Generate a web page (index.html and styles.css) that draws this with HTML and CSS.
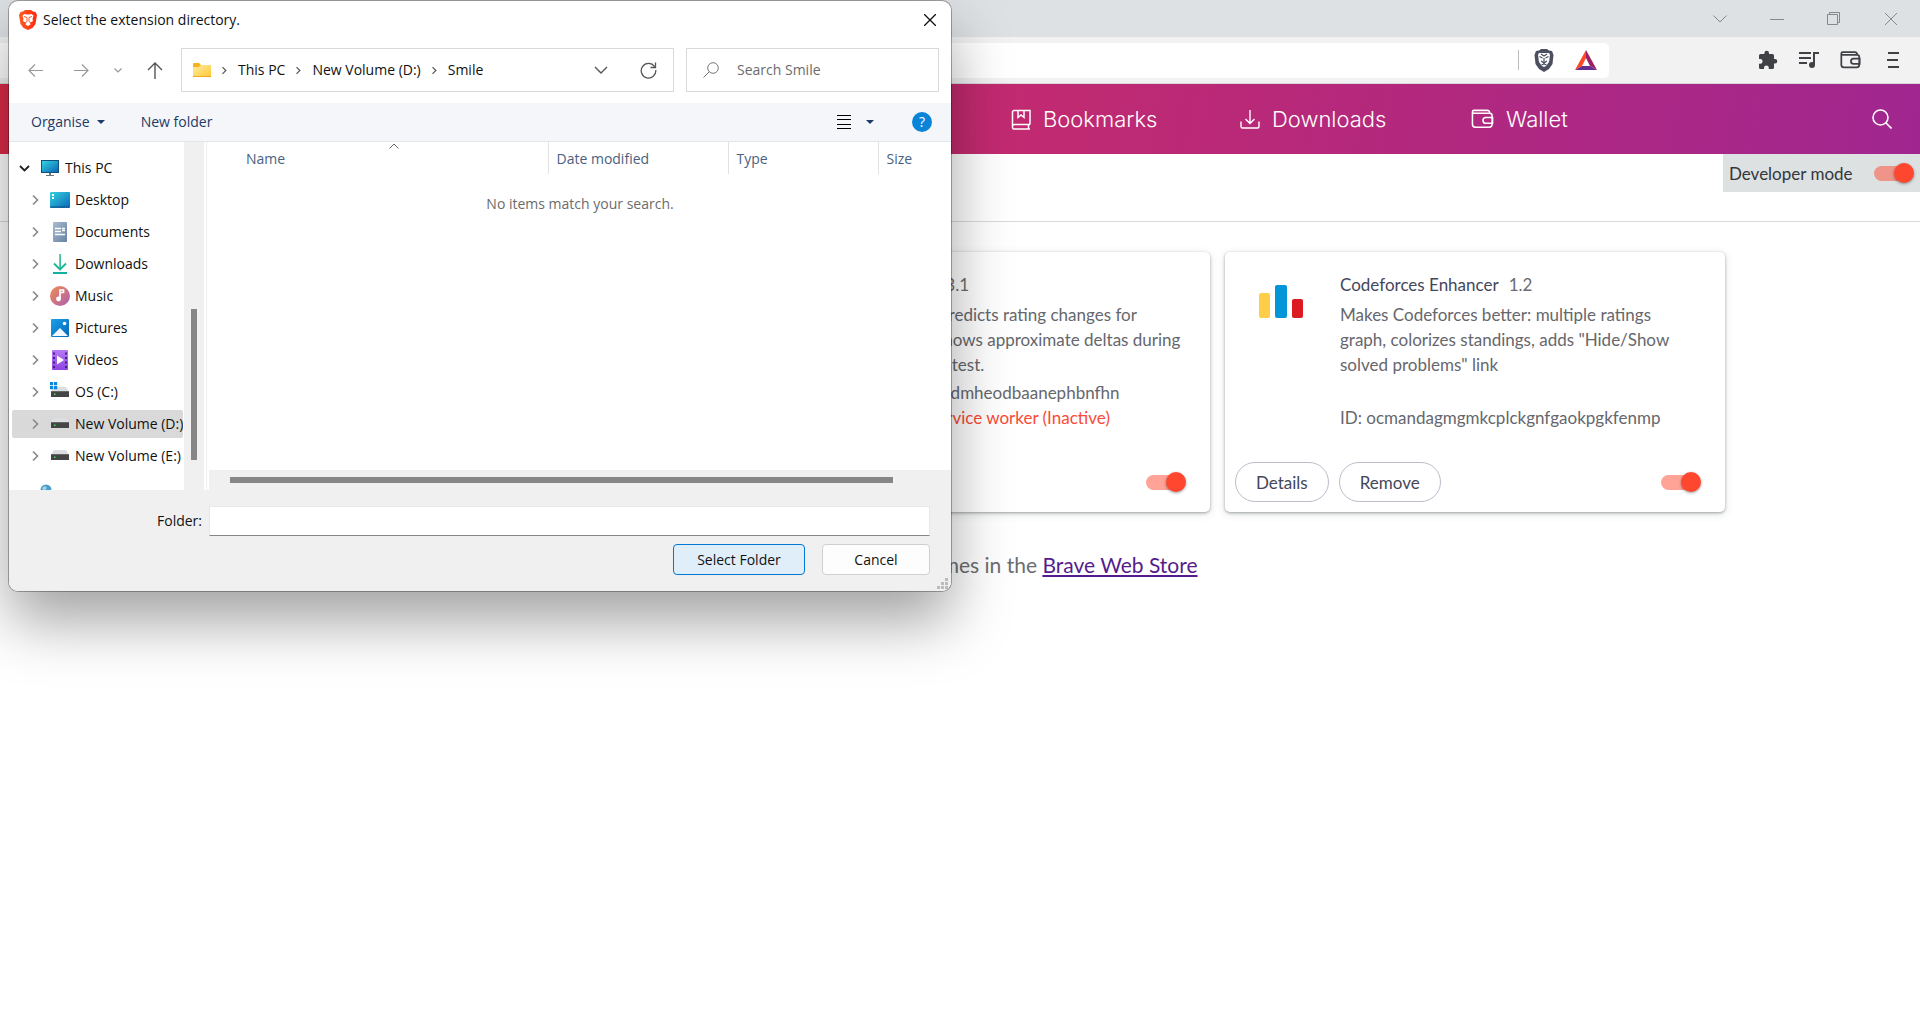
FILE: index.html
```html
<!DOCTYPE html>
<html lang="en">
<head>
<meta charset="utf-8">
<title>Extensions</title>
<link rel="stylesheet" href="styles.css">
</head>
<body>
<svg class="defs" aria-hidden="true">
  <defs>
    <linearGradient id="teal" x1="0" y1="0" x2="1" y2="1"><stop offset="0" stop-color="#35d3e0"/><stop offset="1" stop-color="#0a66b8"/></linearGradient>
    <linearGradient id="doc" x1="0" y1="0" x2="1" y2="1"><stop offset="0" stop-color="#a9bcd2"/><stop offset="1" stop-color="#6782a3"/></linearGradient>
    <linearGradient id="music" x1="0" y1="0" x2="1" y2="1"><stop offset="0" stop-color="#f28b4e"/><stop offset="1" stop-color="#a860b4"/></linearGradient>
    <linearGradient id="pic" x1="0" y1="0" x2="1" y2="1"><stop offset="0" stop-color="#1ba0ea"/><stop offset="1" stop-color="#0567b7"/></linearGradient>
    <linearGradient id="video" x1="0" y1="0" x2="0" y2="1"><stop offset="0" stop-color="#b57af5"/><stop offset="1" stop-color="#8e45e0"/></linearGradient>
    <linearGradient id="folder" x1="0" y1="0" x2="1" y2="1"><stop offset="0" stop-color="#ffe9a0"/><stop offset="1" stop-color="#ffc934"/></linearGradient>
    <linearGradient id="drop" x1="0" y1="0" x2="0" y2="1"><stop offset="0" stop-color="#31c27c"/><stop offset="1" stop-color="#0fb0a0"/></linearGradient>
    <linearGradient id="brave" x1="0" y1="0" x2="1" y2="0"><stop offset="0" stop-color="#ff5a20"/><stop offset="1" stop-color="#ff2a10"/></linearGradient>
    <symbol id="chev" viewBox="0 0 8 12"><path d="M2 1.500 6.500 6 2 10.500" fill="none" stroke="currentColor" stroke-width="1.600"/></symbol>
    <symbol id="down" viewBox="0 0 14 8"><path d="M1 1l6 6 6-6" fill="none" stroke="currentColor" stroke-width="1.400"/></symbol>
    <symbol id="drive" viewBox="0 0 20 20"><path d="M4 7h12l3 5H1z" fill="#dcdfe2"/><path d="M1 11h18v6H1z" fill="#454545"/><path d="M1 11h18v1H1z" fill="#666"/><path d="M4 13.500h1.500V15H4z" fill="#3fe04a"/></symbol>
    <symbol id="wallet" viewBox="0 0 24 20"><path d="M1.500 3v12.500a3 3 0 0 0 3 3h14.500a3 3 0 0 0 3-3V6.500a2.500 2.500 0 0 0-2.500-2.500H3a1.500 1.500 0 0 1 0-3h14a2.500 2.500 0 0 1 2.500 3M22.500 8.500h-7a3 3 0 0 0 0 6h7z" fill="none" stroke="currentColor"/></symbol>
  </defs>
</svg>

<header class="titlebar">
  <button class="icon-btn" aria-label="Search tabs"><svg width="14" height="8"><path d="M.5.5l6.500 6.500L13.500.5" fill="none" stroke="currentColor"/></svg></button>
  <button class="icon-btn" aria-label="Minimise"><svg width="14" height="14"><path d="M0 7.500h14" stroke="currentColor"/></svg></button>
  <button class="icon-btn" aria-label="Restore"><svg width="14" height="14"><path d="M.5 2.500h10v10H.5zM2.500 2.500v-2h10v10h-2" fill="none" stroke="currentColor"/></svg></button>
  <button class="icon-btn" aria-label="Close window"><svg width="14" height="14"><path d="M1 1l12 12M13 1 1 13" stroke="currentColor"/></svg></button>
</header>

<div class="toolbar">
  <div class="omnibox">
    <span class="omnibox-sep"></span>
    <button class="icon-btn" aria-label="Shields"><svg width="20" height="23" viewBox="0 0 20 23"><path d="M5 1.500 7 0h6l2 1.500 3 .5 1.500 4-1 9-3.500 5-5 3-5-3L1.500 15 .5 6 2 2z" fill="#4c4f60"/><path d="M4 6 5 4h10l1 2-1 7-3 4-2 1-2-1-3-4z" fill="#fff"/><path d="M5.500 7.500 8.500 9M14.500 7.500l-3 1.500M7 5l3 2 3-2M10 9v4M7 12l3 2 3-2M7.500 16l2.500-1 2.500 1" fill="none" stroke="#4c4f60" stroke-width="1.200"/></svg></button>
    <button class="icon-btn" aria-label="Rewards"><svg width="22" height="20" viewBox="0 0 22 20"><path d="M11 0 0 20l7-4 4-8z" fill="#ff4724"/><path d="M11 0l11 20-7-4-4-8z" fill="#9e1f63"/><path d="M0 20h22l-7-4H7z" fill="#662d91"/></svg></button>
  </div>
  <div class="toolbar-actions">
    <button class="icon-btn" aria-label="Extensions"><svg width="20" height="20" viewBox="0 0 20 20"><path d="M17 9h-1V5.500A1.500 1.500 0 0 0 14.500 4H11V3a2.300 2.300 0 0 0-4.600 0v1H2.500A1.500 1.500 0 0 0 1 5.500V9h1.200a2.400 2.400 0 0 1 0 4.800H1v3.700A1.500 1.500 0 0 0 2.500 19H6v-1.200a2.400 2.400 0 0 1 4.800 0V19h3.700a1.500 1.500 0 0 0 1.500-1.500v-3.900h1A2.300 2.300 0 0 0 17 9z" fill="currentColor"/></svg></button>
    <button class="icon-btn" aria-label="Playlist"><svg width="20" height="18" viewBox="0 0 20 18"><path d="M0 2h12M0 7h12M0 12h8M15 14V2h5" fill="none" stroke="currentColor" stroke-width="2"/><circle cx="13" cy="14" r="3" fill="currentColor"/></svg></button>
    <button class="icon-btn" aria-label="Wallet"><svg width="21" height="18"><use href="#wallet" stroke-width="2"/></svg></button>
    <button class="icon-btn" aria-label="Menu"><svg width="12" height="18"><path d="M1 2h11M0 9h11M1 16h11" stroke="currentColor" stroke-width="2"/></svg></button>
  </div>
</div>

<nav class="nav">
  <a class="nav-link" href="#bookmarks"><svg width="20" height="21" viewBox="0 0 20 21"><path d="M19 15.500V1.500H3A1.500 1.500 0 0 0 1.500 3v15A1.800 1.800 0 0 0 3.300 20H19M19 15.500H3.500a2 2 0 0 0-2 2M17.500 16v4M7 1.500v7l3-2.500 3 2.500v-7" fill="none" stroke="currentColor" stroke-width="1.500"/></svg>Bookmarks</a>
  <a class="nav-link" href="#downloads"><svg width="20" height="20" viewBox="0 0 20 20"><path d="M10 1v13M5.500 10 10 14.500l4.500-4.500M1 12.500v5A1.500 1.500 0 0 0 2.500 19h15a1.500 1.500 0 0 0 1.500-1.500v-5" fill="none" stroke="currentColor" stroke-width="1.400"/></svg>Downloads</a>
  <a class="nav-link" href="#wallet-page"><svg width="23" height="20"><use href="#wallet" stroke-width="1.600"/></svg>Wallet</a>
  <button class="icon-btn" aria-label="Search"><svg width="20" height="20"><circle cx="8.500" cy="8.500" r="7.500" fill="none" stroke="currentColor" stroke-width="1.600"/><path d="M14 14l5.500 5.500" stroke="currentColor" stroke-width="1.600"/></svg></button>
</nav>

<div class="subbar">
  <label class="dev-mode">Developer mode <input class="toggle" type="checkbox" checked></label>
</div>

<main class="page">
  <section class="cards">
    <article class="card card-second">
      <div class="card-body">
        <div class="card-text">
          <h2 class="card-title">CF Carrot+ <span class="version">0.6.3.1</span></h2>
          <p class="desc">Rating add-on: Predicts rating changes for<br>in Codeforces, shows approximate deltas during<br>and after the contest.</p>
          <p class="meta">ID: hpplicjdhhfllildmheodbaanephbnfhn<br>Inspect views <a class="worker" href="#worker">service worker (Inactive)</a></p>
        </div>
      </div>
      <div class="card-actions"><input class="toggle" type="checkbox" checked aria-label="Enable Carrot"></div>
    </article>
    <article class="card">
      <div class="card-body">
        <svg class="card-icon" width="44" height="33" viewBox="0 0 44 33"><rect y="8" width="11" height="25" rx="2" fill="#ffce48"/><rect x="16" width="12" height="33" rx="2" fill="#0296d8"/><rect x="33" y="14" width="11" height="19" rx="2" fill="#dc1a22"/></svg>
        <div class="card-text">
          <h2 class="card-title">Codeforces Enhancer <span class="version">1.2</span></h2>
          <p class="desc">Makes Codeforces better: multiple ratings<br>graph, colorizes standings, adds "Hide/Show<br>solved problems" link</p>
          <p class="meta">ID: ocmandagmgmkcplckgnfgaokpgkfenmp</p>
        </div>
      </div>
      <div class="card-actions">
        <button class="pill">Details</button>
        <button class="pill">Remove</button>
        <input class="toggle" type="checkbox" checked aria-label="Enable Codeforces Enhancer">
      </div>
    </article>
  </section>
  <p class="store">Find extensions and themes in the <a href="#store">Brave Web Store</a></p>
</main>

<div class="dialog" role="dialog" aria-label="Select the extension directory.">
  <div class="dialog-title">
    <svg width="18" height="20" viewBox="0 0 18 20"><path d="M4 1.500 6 0h6l2 1.500 2.500.5L18 5l-1.500 9-3 4L9 20l-4.500-2-3-4L0 5l1.500-3z" fill="url(#brave)"/><path d="M3.500 5.500 5.500 4l2 .5h3l2-.5 2 1.500-1 3.500.5 2-3 2 .5 1.500L9 16l-2.500-1.500.5-1.500-3-2 .5-2z" fill="#fff"/><path d="M5 6.500l3 1v4l-2 1.500M13 6.500l-3 1v4l2 1.500" fill="none" stroke="#ff5a2c"/></svg>
    <span class="grow">Select the extension directory.</span>
    <button class="icon-btn" aria-label="Close"><svg width="12" height="12"><path d="M0 0l12 12M12 0 0 12" stroke="#111" stroke-width="1.300"/></svg></button>
  </div>

  <div class="dialog-nav">
    <div class="history">
      <button class="icon-btn dim back" aria-label="Back"><svg width="15" height="13"><path d="M15 6.500H1M7 .5l-6 6 6 6" fill="none" stroke="currentColor" stroke-width="1.200"/></svg></button>
      <button class="icon-btn dim" aria-label="Forward"><svg width="15" height="13"><path d="M0 6.500h14M8 .5l6 6-6 6" fill="none" stroke="currentColor" stroke-width="1.200"/></svg></button>
      <button class="icon-btn dim" aria-label="Recent locations"><svg width="8" height="5"><path d="M.5.500 4 4 7.500.5" fill="none" stroke="currentColor" stroke-width="1.200"/></svg></button>
      <button class="icon-btn" aria-label="Up"><svg width="16" height="17"><path d="M8 17V1M1 8l7-7 7 7" fill="none" stroke="currentColor" stroke-width="1.400"/></svg></button>
    </div>
    <div class="address">
      <svg width="18" height="14" viewBox="0 0 18 14"><path d="M0 1a1 1 0 0 1 1-1h5l2 2h9v3H0z" fill="#f5b21c"/><path d="M0 4h5.500L8 2h9a1 1 0 0 1 1 1v11H0z" fill="url(#folder)"/><path d="M0 13h18v1H0z" fill="#eda81c"/></svg>
      <svg class="crumb-sep" width="6" height="9"><use href="#chev"/></svg><span>This PC</span>
      <svg class="crumb-sep" width="6" height="9"><use href="#chev"/></svg><span>New Volume (D:)</span>
      <svg class="crumb-sep" width="6" height="9"><use href="#chev"/></svg><span class="grow">Smile</span>
      <button class="icon-btn" aria-label="Previous locations"><svg width="14" height="8"><use href="#down"/></svg></button>
      <button class="icon-btn" aria-label="Refresh"><svg width="17" height="17"><path d="M14.500 4.500A7.300 7.300 0 1 0 15.800 8M15.500 .5v5h-5" fill="none" stroke="currentColor" stroke-width="1.300"/></svg></button>
    </div>
    <label class="search">
      <svg width="16" height="16"><circle cx="10" cy="6" r="5.300" fill="none" stroke="currentColor"/><path d="M6.300 9.700 .5 15.500" stroke="currentColor"/></svg>
      <input type="text" placeholder="Search Smile" aria-label="Search Smile">
    </label>
  </div>

  <div class="commands">
    <button class="command">Organise <svg width="8" height="4"><path d="M0 0h8L4 4z" fill="currentColor"/></svg></button>
    <button class="command">New folder</button>
    <span class="grow"></span>
    <button class="command view" aria-label="Change view"><svg width="14" height="14"><path d="M0 .5h14M0 4.500h14M0 9.500h14M0 13.500h14" stroke="#000"/></svg><svg width="8" height="4"><path d="M0 0h8L4 4z" fill="currentColor"/></svg></button>
    <button class="help" aria-label="Help">?</button>
  </div>

  <div class="browser">
    <ul class="tree">
      <li class="node root"><svg class="open" width="11" height="7"><path d="M1 1l4.500 4.500L10 1" fill="none" stroke="currentColor" stroke-width="1.800"/></svg><svg width="20" height="20" viewBox="0 0 20 20"><path d="M1 2h18v13H1z" fill="#12507c"/><path d="M2 3h16v11H2z" fill="url(#teal)"/><path d="M9 15h2v2H9zM6 17h8v1H6z" fill="#6d7780"/></svg>This PC</li>
      <li class="node"><svg width="8" height="12"><use href="#chev"/></svg><svg width="20" height="20"><rect y="2" width="20" height="16" rx="1" fill="url(#teal)"/><path d="M2 4h2v2H2zM2 7h2v2H2z" fill="#fff"/><path d="M0 17h15M16 17h1M18 17h1" stroke="#0b4a7c"/></svg>Desktop</li>
      <li class="node"><svg width="8" height="12"><use href="#chev"/></svg><svg width="20" height="20"><rect x="3" width="14" height="20" rx="1" fill="url(#doc)"/><path d="M5 6.500h6M5 9.500h6M5 12.500h10M12 6.500h3M12 8.500h3" stroke="#fff" stroke-width="1.500"/></svg>Documents</li>
      <li class="node"><svg width="8" height="12"><use href="#chev"/></svg><svg width="20" height="20"><path d="M9.300 0h1.600v15H9.300zM3 18h14v2H3z" fill="url(#drop)"/><path d="M4 9.500l6 6 6-6" fill="none" stroke="#18b592" stroke-width="1.800"/></svg>Downloads</li>
      <li class="node"><svg width="8" height="12"><use href="#chev"/></svg><svg width="20" height="20"><circle cx="10" cy="10" r="10" fill="url(#music)"/><circle cx="8.500" cy="13" r="2.400" fill="#fff"/><path d="M10 13V4h3.500v2.500H11" fill="none" stroke="#fff" stroke-width="1.700"/></svg>Music</li>
      <li class="node"><svg width="8" height="12"><use href="#chev"/></svg><svg width="20" height="20"><rect x="1" y="1" width="18" height="18" rx="1" fill="url(#pic)"/><circle cx="14.500" cy="5.500" r="1.800" fill="#fff"/><path d="M2 18l8-8 8 8z" fill="#f2f8ff"/></svg>Pictures</li>
      <li class="node"><svg width="8" height="12"><use href="#chev"/></svg><svg width="20" height="20"><rect x="2" width="16" height="20" rx="1" fill="url(#video)"/><path d="M4 2.500v16M16 2.500v16" stroke="#452080" stroke-width="2" stroke-dasharray="2 2.500"/><path d="M7 5.500v9l7-4.500z" fill="#fff"/></svg>Videos</li>
      <li class="node"><svg width="8" height="12"><use href="#chev"/></svg><svg width="20" height="20"><use href="#drive" y="-2"/><path d="M0 0h3.200v3.200H0zM4 0h3.200v3.200H4zM0 4h3.200v3.200H0zM4 4h3.200v3.200H4z" fill="#0a86dc"/></svg>OS (C:)</li>
      <li class="node selected"><svg width="8" height="12"><use href="#chev"/></svg><svg width="20" height="20"><use href="#drive" y="-3"/></svg>New Volume (D:)</li>
      <li class="node"><svg width="8" height="12"><use href="#chev"/></svg><svg width="20" height="20"><use href="#drive" y="-3"/></svg>New Volume (E:)</li>
      <li class="node root"><svg width="11" height="7"></svg><svg width="20" height="20"><circle cx="6" cy="12" r="5.500" fill="#4b9cc8"/><path d="M2 10l3-2 2 2-3 3z" fill="#a5d3e8"/></svg></li>
    </ul>
    <div class="vscroll"><div class="vthumb"></div></div>
    <div class="files">
      <table class="columns">
        <thead><tr><th class="col-name">Name<svg class="sort" width="10" height="6"><path d="M.5 5.500 5 1l4.500 4.500" fill="none" stroke="#666"/></svg></th><th class="col-date">Date modified</th><th class="col-type">Type</th><th>Size</th></tr></thead>
      </table>
      <p class="empty">No items match your search.</p>
      <div class="hscroll"><div class="hthumb"></div></div>
    </div>
  </div>

  <div class="dialog-foot">
    <label class="folder-row">Folder:<input type="text"></label>
    <div class="buttons">
      <button class="btn primary">Select Folder</button>
      <button class="btn">Cancel</button>
    </div>
    <svg class="grip" width="11" height="11"><path d="M8 0h3v3H8zM4 4h3v3H4zM8 4h3v3H8zM0 8h3v3H0zM4 8h3v3H4zM8 8h3v3H8z" fill="#bbb"/></svg>
  </div>
</div>
</body>
</html>
```
FILE: styles.css
```css
* { box-sizing: border-box; }

body {
  margin: 0;
  min-height: 100vh;
  position: relative;
  overflow-x: hidden;
  background: #fff;
  color: #66676d;
  font: 17px/25px Lato, "Open Sans", sans-serif;
}

button, input { font: inherit; color: inherit; }
h2, p, ul { margin: 0; padding: 0; }
svg { display: block; flex: none; }
.defs { position: absolute; width: 0; height: 0; }
.grow { flex: 1; }

.icon-btn {
  display: flex;
  padding: 0;
  border: 0;
  background: none;
}

/* Browser frame */
.titlebar {
  display: flex;
  justify-content: flex-end;
  align-items: center;
  gap: 43px;
  height: 37px;
  padding-right: 22px;
  background: #dee1e4;
  color: #888;
}

.toolbar {
  display: flex;
  align-items: center;
  height: 47px;
  padding-right: 21px;
  background: #f2f2f2;
  border-bottom: 1px solid #d8d8dc;
  color: #3f4145;
}

.omnibox {
  display: flex;
  align-items: center;
  justify-content: flex-end;
  gap: 21px;
  flex: 1;
  height: 35px;
  margin-right: 149px;
  padding-right: 12px;
  background: #fff;
  border-radius: 0 5px 5px 0;
}

.omnibox-sep {
  width: 1px;
  height: 20px;
  margin-right: -6px;
  background: #bbb;
}

.toolbar-actions { display: flex; align-items: center; gap: 21px; }
.toolbar-actions .icon-btn:last-child { margin-left: 5px; }

.nav {
  display: grid;
  grid-template-columns: 229px 231px 401px 20px;
  justify-content: end;
  align-items: center;
  height: 70px;
  padding-right: 28px;
  background: linear-gradient(100deg, #dc2c48 0%, #c22a70 52%, #a0268f 100%);
  color: #fff;
}

.nav-link {
  display: flex;
  align-items: center;
  gap: 12px;
  color: inherit;
  font: 300 22px/30px Inter, "Open Sans", sans-serif;
  text-decoration: none;
}

.subbar {
  display: flex;
  justify-content: flex-end;
  align-items: flex-start;
  height: 68px;
  border-bottom: 1px solid #d9dadc;
}

.dev-mode {
  display: flex;
  align-items: center;
  justify-content: space-between;
  width: 197px;
  height: 38px;
  padding: 0 6px;
  background: #dde1e2;
  color: #33363a;
}

.toggle {
  appearance: none;
  display: flex;
  align-items: center;
  justify-content: flex-end;
  width: 40px;
  height: 15px;
  margin: 0;
  background: linear-gradient(90deg, rgba(255, 71, 48, .5) 34px, transparent 34px);
  border-radius: 8px;
}

.toggle::after {
  content: "";
  width: 20px;
  height: 20px;
  flex: none;
  border-radius: 50%;
  background: #ff4730;
  box-shadow: 0 1px 3px rgba(0, 0, 0, .4);
}

/* Extension cards */
.cards {
  display: grid;
  grid-template-columns: repeat(3, 500px);
  justify-content: center;
  gap: 15px;
  padding: 30px 0;
}

.card-second { grid-column-start: 2; }

.card {
  display: flex;
  flex-direction: column;
  height: 260px;
  background: #fff;
  border-radius: 5px;
  box-shadow: 0 1px 3px rgba(60, 70, 70, .45), 0 2px 8px rgba(60, 70, 70, .15);
}

.card-body { display: flex; flex: 1; }
.card-icon { margin: 33px -78px 0 34px; }

.card-text {
  display: flex;
  flex-direction: column;
  width: 385px;
  margin-left: auto;
  padding: 20px 0 22px;
  white-space: nowrap;
}

.card-title {
  margin-bottom: 5px;
  color: #44475a;
  font-size: 17px;
  font-weight: 400;
}

.version { margin-left: 6px; color: #6b6c74; }
.meta { margin-top: auto; }
.worker { color: #fb4a35; text-decoration: none; }

.card-actions {
  display: flex;
  align-items: center;
  gap: 10px;
  height: 60px;
  padding: 0 24px 0 10px;
}

.card-actions .toggle { margin-left: auto; }

.pill {
  height: 40px;
  padding: 0 20px;
  background: #fff;
  border: 1px solid #bcbccb;
  border-radius: 20px;
  color: #44475a;
}

.store {
  padding-top: 10px;
  color: #6c6d72;
  font-size: 21px;
  text-align: center;
}

.store a { color: #541c8c; }

/* Folder picker window */
.dialog {
  position: absolute;
  top: 1px;
  left: 9px;
  width: 942px;
  overflow: hidden;
  background: #fff;
  border-radius: 9px;
  box-shadow: 0 0 0 1px rgba(0, 0, 0, .3), 0 30px 60px rgba(0, 0, 0, .37);
  color: #111;
  font: 14px/20px "Open Sans", "Noto Sans", sans-serif;
}

.dialog-title {
  display: flex;
  align-items: center;
  gap: 6px;
  height: 37px;
  padding: 0 15px 0 10px;
}

.dialog-nav {
  display: flex;
  gap: 12px;
  padding: 10px 12px 11px 19px;
  color: #555;
}

.history {
  display: flex;
  align-items: center;
  gap: 25px;
  width: 134px;
}

.back { margin-right: 6px; }
.dim { color: #999; }

.address, .search {
  display: flex;
  align-items: center;
  height: 44px;
  border: 1px solid #d9d9d9;
}

.address { flex: 1; padding: 0 16px 0 11px; margin-left: 7px; }
.address span { color: #111; }
.address .icon-btn + .icon-btn { margin-left: 32px; }
.crumb-sep { margin: 0 11px 0 10px; }

.search {
  gap: 18px;
  width: 253px;
  padding: 0 16px;
  color: #777;
}

.search input {
  width: 100%;
  padding: 0;
  border: 0;
  outline: 0;
  background: none;
}

.search input::placeholder { color: #6b6b6b; opacity: 1; }

.commands {
  display: flex;
  align-items: center;
  height: 39px;
  padding: 0 19px 0 22px;
  background: #f4f6f9;
  border-bottom: 1px solid #e4e7ea;
}

.command {
  display: flex;
  align-items: center;
  gap: 7px;
  margin-right: 36px;
  padding: 0;
  border: 0;
  background: none;
  color: #1e3a66;
}

.view { gap: 15px; margin-right: 38px; }

.help {
  width: 20px;
  height: 20px;
  padding: 0;
  border: 0;
  border-radius: 50%;
  background: #0a84d8;
  color: #fff;
  line-height: 20px;
}

.browser { display: flex; height: 348px; }

.tree {
  width: 174px;
  padding: 12px 0 0 3px;
  overflow: hidden;
  list-style: none;
}

.node {
  display: flex;
  align-items: center;
  gap: 5px;
  height: 28px;
  margin-bottom: 4px;
  padding-left: 19px;
  white-space: nowrap;
}

.node svg:first-child { margin-right: 6px; color: #888; }
.node.root { padding-left: 7px; }
.node.root svg:first-child { margin-right: 5px; }
.node svg.open:first-child { color: #222; }
.selected { background: #d9d9d9; border-radius: 2px; }

.vscroll {
  width: 20px;
  margin-left: 1px;
  padding: 167px 7px 0;
  background: #f0f0f0;
}

.vthumb { height: 151px; background: #868686; }

.files {
  display: flex;
  flex: 1;
  flex-direction: column;
  margin-left: 2px;
  padding-left: 2px;
  border-left: 1px solid #f0f0f0;
}

.columns {
  width: 100%;
  table-layout: fixed;
  border-collapse: collapse;
}

.columns th {
  position: relative;
  height: 32px;
  padding: 2px 0 0 8px;
  border-left: 1px solid #e2e2e2;
  color: #4a5f80;
  font-weight: 400;
  text-align: left;
}

.columns .col-name { width: 339px; padding-left: 37px; border-left: 0; }
.col-date { width: 180px; }
.col-type { width: 150px; }
.sort { position: absolute; top: 1px; left: 180px; }

.empty {
  flex: 1;
  padding-top: 20px;
  color: #6b6b6b;
  text-align: center;
}

.hscroll { height: 20px; padding: 7px 58px 7px 21px; background: #f0f0f0; }
.hthumb { height: 6px; background: #868686; }

.dialog-foot {
  position: relative;
  padding: 16px 21px 16px 0;
  background: #f0f0f0;
}

.folder-row {
  display: flex;
  align-items: center;
  justify-content: flex-end;
  gap: 7px;
}

.folder-row input {
  width: 721px;
  height: 30px;
  padding: 0 8px;
  border: 1px solid #e8e8e8;
  border-bottom-color: #868686;
  outline: 0;
  background: #fff;
}

.buttons {
  display: flex;
  justify-content: flex-end;
  gap: 17px;
  padding-top: 8px;
}

.btn {
  width: 108px;
  height: 31px;
  padding: 0;
  background: #fdfdfd;
  border: 1px solid #d0d0d0;
  border-radius: 4px;
}

.primary { width: 132px; background: #e0eef9; border-color: #0078d4; }
.grip { position: absolute; right: 3px; bottom: 2px; }
```
